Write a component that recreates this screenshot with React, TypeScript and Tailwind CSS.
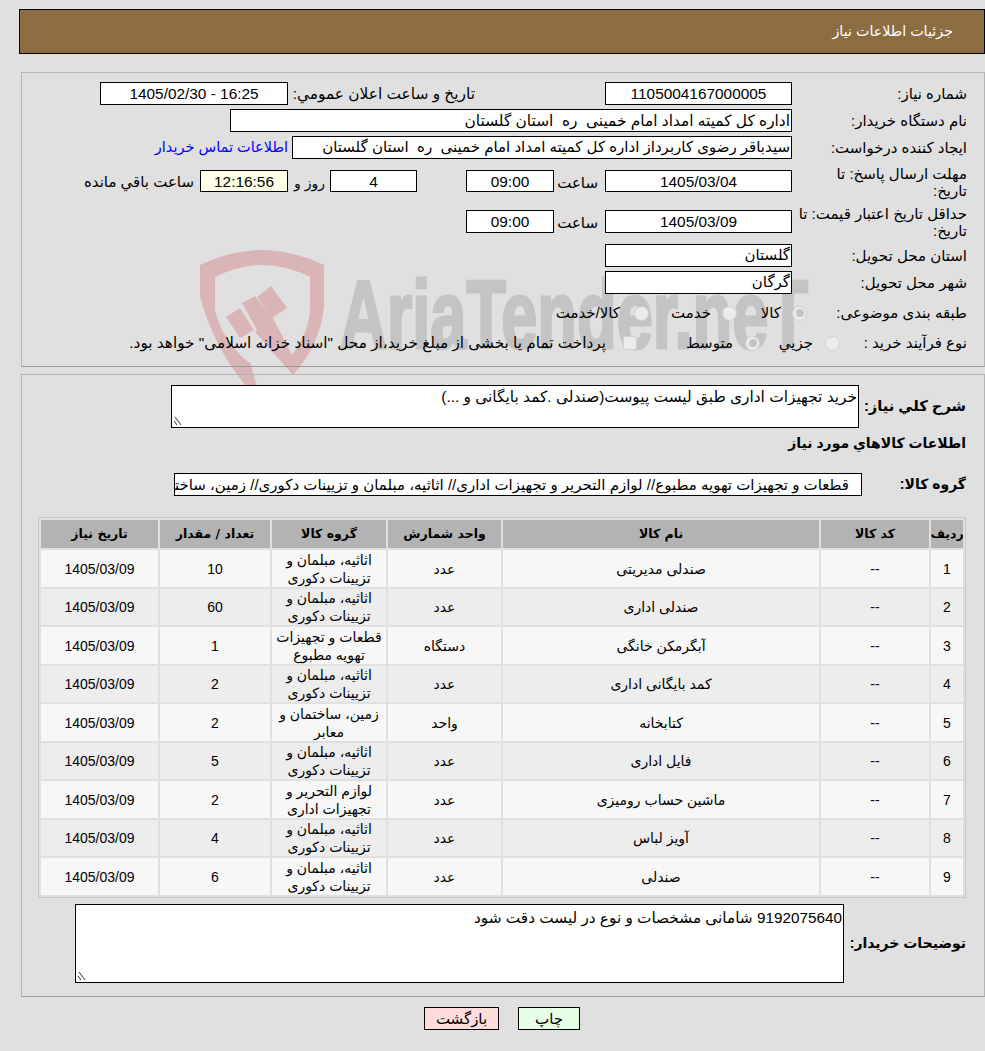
import React from 'react';

const ROWS = [
  { id: 1, name: 'صندلی مدیریتی', unit: 'عدد', group: 'اثاثیه، مبلمان و تزیینات دکوری', qty: '10' },
  { id: 2, name: 'صندلی اداری', unit: 'عدد', group: 'اثاثیه، مبلمان و تزیینات دکوری', qty: '60' },
  { id: 3, name: 'آبگرمکن خانگی', unit: 'دستگاه', group: 'قطعات و تجهیزات تهویه مطبوع', qty: '1' },
  { id: 4, name: 'کمد بایگانی اداری', unit: 'عدد', group: 'اثاثیه، مبلمان و تزیینات دکوری', qty: '2' },
  { id: 5, name: 'کتابخانه', unit: 'واحد', group: 'زمین، ساختمان و معابر', qty: '2' },
  { id: 6, name: 'فایل اداری', unit: 'عدد', group: 'اثاثیه، مبلمان و تزیینات دکوری', qty: '5' },
  { id: 7, name: 'ماشین حساب رومیزی', unit: 'عدد', group: 'لوازم التحریر و تجهیزات اداری', qty: '2' },
  { id: 8, name: 'آویز لباس', unit: 'عدد', group: 'اثاثیه، مبلمان و تزیینات دکوری', qty: '4' },
  { id: 9, name: 'صندلی', unit: 'عدد', group: 'اثاثیه، مبلمان و تزیینات دکوری', qty: '6' },
];

const Field = ({ className = '', children }: { className?: string; children?: React.ReactNode }) => (
  <div className={`h-[23px] shrink-0 border border-black bg-white flex items-center justify-center whitespace-pre overflow-hidden ${className}`}>
    {children}
  </div>
);

const Label = ({ children }: { children: React.ReactNode }) => (
  <div className="w-[175px] shrink-0 leading-[17px]">{children}</div>
);

const Radio = ({ checked = false }: { checked?: boolean }) => (
  <span className="w-[15px] h-[15px] shrink-0 rounded-full border border-[#d0d0d0] bg-[#ececec] flex items-center justify-center">
    {checked && <span className="w-[8px] h-[8px] rounded-full bg-[#c4c4c4]" />}
  </span>
);

const Resizer = () => (
  <svg className="absolute left-[1px] bottom-[1px]" width="10" height="10" viewBox="0 0 10 10">
    <path d="M2 1 L8 9 M1 5 L4 9" stroke="#555" strokeWidth="1.1" fill="none" />
  </svg>
);

export default function App() {
  return (
    <div dir="rtl" className="relative w-[985px] h-[1051px] overflow-hidden bg-[#e0e0e0] text-[15px] text-black font-['Liberation_Sans','DejaVu_Sans',sans-serif]">
      {/* watermark */}
      <svg className="absolute left-[190px] top-[240px] [direction:ltr]" width="640" height="160" viewBox="0 0 640 160">
        <path d="M10 25 Q72 -5 134 25 V67 Q130 105 103 135 L65 92 L83 78 L102 115 Q120 90 120 67 V37 Q72 13 25 37 V70 Q32 100 58 122 L60 122 L67 147 H57 Q25 110 10 57 Z" fill="#d9b5b7" />
        <path d="M36 77 L50 68 L64 90 L50 98 Z M52 63 L65 56 L83 79 L68 92 Z M67 57 L81 46 L97 68 L82 78 Z" fill="#d9b5b7" />
        <text x="150" y="108" fontFamily="Liberation Sans, sans-serif" fontWeight="700" fontSize="96" fill="#c4c4c4" stroke="#c4c4c4" strokeWidth="3" textLength="468" lengthAdjust="spacingAndGlyphs">AriaTender.neT</text>
      </svg>

      <div className="relative pt-[9px]">
        <div className="ml-[19px] h-[45px] border border-black bg-[#8c6d42] flex items-center pr-[31px] pt-[1px] text-white text-[14.3px]">
          جزئیات اطلاعات نیاز
        </div>

        {/* top panel */}
        <div className="ml-[21px] mt-[18px] h-[295px] border border-[#b5b5b5] border-b-[#999] pr-[17px] pt-[9px]">
          <div className="flex items-center">
            <Label>شماره نیاز:</Label>
            <Field className="w-[187px] text-[15.4px]">1105004167000005</Field>
            <div className="w-[130px] shrink-0" />
            <div className="w-[187px] shrink-0 text-[15.4px]">تاريخ و ساعت اعلان عمومي:</div>
            <Field className="w-[188px] text-[15.4px]">16:25 - 1405/02/30</Field>
          </div>
          <div className="flex items-center mt-[4px]">
            <Label>نام دستگاه خریدار:</Label>
            <Field className="w-[562px] !justify-start pr-px text-[15.4px]">اداره کل کمیته امداد امام خمینی  ره  استان گلستان</Field>
          </div>
          <div className="flex items-center mt-[4px]">
            <Label>ایجاد کننده درخواست:</Label>
            <Field className="w-[500px] !justify-start pr-px">سیدباقر رضوی کاربرداز اداره کل کمیته امداد امام خمینی  ره  استان گلستان</Field>
            <a className="mr-[4px] text-[#0000ff] text-[14.5px]">اطلاعات تماس خریدار</a>
          </div>
          <div className="flex items-start mt-[6px] h-[40px]">
            <Label>مهلت ارسال پاسخ: تا<br />تاریخ:</Label>
            <Field className="w-[187px] !h-[22px] mt-[5px] text-[15.4px]">1405/03/04</Field>
            <div className="w-[51px] mt-[7px] pr-[7px] shrink-0">ساعت</div>
            <Field className="w-[88px] !h-[22px] mt-[5px] text-[15.4px]">09:00</Field>
            <div className="w-[49px] shrink-0" />
            <Field className="w-[87px] !h-[22px] mt-[5px] text-[15.4px]">4</Field>
            <div className="w-[42px] mt-[8px] pr-[5px] shrink-0 text-[14px]">روز و</div>
            <Field className="w-[88px] !h-[22px] mt-[5px] !bg-[#ffffe8] text-[15.4px]">12:16:56</Field>
            <div className="mt-[6px] pr-[6px] whitespace-nowrap">ساعت باقي مانده</div>
          </div>
          <div className="flex items-start h-[36px]">
            <Label>حداقل تاریخ اعتبار قیمت: تا<br />تاریخ:</Label>
            <Field className="w-[187px] mt-[5px] text-[15.4px]">1405/03/09</Field>
            <div className="w-[51px] mt-[7px] pr-[7px] shrink-0">ساعت</div>
            <Field className="w-[88px] mt-[5px] text-[15.4px]">09:00</Field>
          </div>
          <div className="flex items-center mt-[3px]">
            <Label>استان محل تحویل:</Label>
            <Field className="w-[187px] !justify-start pr-px">گلستان</Field>
          </div>
          <div className="flex items-center mt-[4px]">
            <Label>شهر محل تحویل:</Label>
            <Field className="w-[187px] !justify-start pr-px">گرگان</Field>
          </div>
          <div className="flex items-center mt-[9px] h-[20px]">
            <div className="w-[160px] shrink-0">طبقه بندی موضوعی:</div>
            <Radio checked />
            <span className="mr-[11px] w-[44px]">کالا</span>
            <Radio />
            <span className="mr-[11px] w-[62px]">خدمت</span>
            <Radio />
            <span className="mr-[14px]">کالا/خدمت</span>
          </div>
          <div className="flex items-center mt-[10px] h-[20px]">
            <div className="w-[127px] shrink-0">نوع فرآیند خرید :</div>
            <Radio />
            <span className="mr-[12px] w-[53px]">جزيي</span>
            <Radio checked />
            <span className="mr-[12px] w-[96px]">متوسط</span>
            <span className="w-[14px] h-[14px] shrink-0 rounded-[2px] border border-[#d0d0d0] bg-[#ececec]" />
            <span className="mr-[17px] whitespace-nowrap text-[15.3px]">پرداخت تمام یا بخشی از مبلغ خرید،از محل "اسناد خزانه اسلامی" خواهد بود.</span>
          </div>
        </div>

        {/* details panel */}
        <div className="ml-[21px] mt-[7px] h-[623px] border border-[#b5b5b5] border-b-[#999] pr-[18px] pt-[10px]">
          <div className="flex items-center">
            <div className="w-[107px] shrink-0 font-bold text-[14.7px]">شرح کلي نیاز:</div>
            <div className="relative w-[688px] h-[43px] border border-black bg-white pr-px leading-[22px] text-[15.4px]">
              خرید تجهیزات اداری طبق لیست پیوست(صندلی .کمد بایگانی و ...)
              <Resizer />
            </div>
          </div>
          <div className="font-bold text-[14px] mt-[5px] h-[20px]">اطلاعات کالاهاي مورد نیاز</div>
          <div className="flex items-center mt-[20px]">
            <div className="w-[104px] shrink-0 font-bold text-[14px]">گروه کالا:</div>
            <div className="w-[688px] h-[23px] border border-black bg-white pr-[12px] whitespace-nowrap overflow-hidden">
              قطعات و تجهیزات تهویه مطبوع// لوازم التحریر و تجهیزات اداری// اثاثیه، مبلمان و تزیینات دکوری// زمین، ساختمان و معابر
            </div>
          </div>

          <div className="w-[928px] mt-[21px] border border-[#c8c8c8] p-[2px] text-[14px]">
            <div className="grid grid-cols-[32px_108px_316px_113px_114px_110px_117px] gap-[2px]">
              {['ردیف', 'کد کالا', 'نام کالا', 'واحد شمارش', 'گروه کالا', 'تعداد / مقدار', 'تاریخ نیاز'].map((h) => (
                <div key={h} className="h-[28px] bg-[#b3b3b3] flex items-center justify-center font-bold text-[12.5px] whitespace-nowrap font-['DejaVu_Sans',sans-serif]">{h}</div>
              ))}
              {ROWS.map((r) => {
                const bg = r.id % 2 ? 'bg-[#f7f7f7]' : 'bg-[#ededed]';
                const cell = `h-[36.5px] pt-[2px] flex items-center justify-center text-center ${bg}`;
                return (
                  <React.Fragment key={r.id}>
                    <div className={cell}>{r.id}</div>
                    <div className={cell}>--</div>
                    <div className={cell}>{r.name}</div>
                    <div className={cell}>{r.unit}</div>
                    <div className={`${cell} !pt-[1px] leading-[18px] px-[3px]`}>{r.group}</div>
                    <div className={cell}>{r.qty}</div>
                    <div className={cell}>1405/03/09</div>
                  </React.Fragment>
                );
              })}
            </div>
          </div>

          <div className="flex items-center mt-[6.5px]">
            <div className="w-[122px] shrink-0 font-bold text-[14px] whitespace-nowrap">توضیحات خریدار:</div>
            <div className="relative w-[769px] h-[79px] border border-black bg-white pr-px leading-[26px] text-[15.3px]">
              9192075640 شامانی مشخصات و نوع در لیست دقت شود
              <Resizer />
            </div>
          </div>
        </div>

        <div className="flex justify-center gap-[19px] mt-[10px] pl-[19px]">
          <button className="w-[62px] h-[23px] border border-black bg-[#e6ffe6]">چاپ</button>
          <button className="w-[75px] h-[23px] border border-black bg-[#ffdddd]">بازگشت</button>
        </div>
      </div>
    </div>
  );
}
